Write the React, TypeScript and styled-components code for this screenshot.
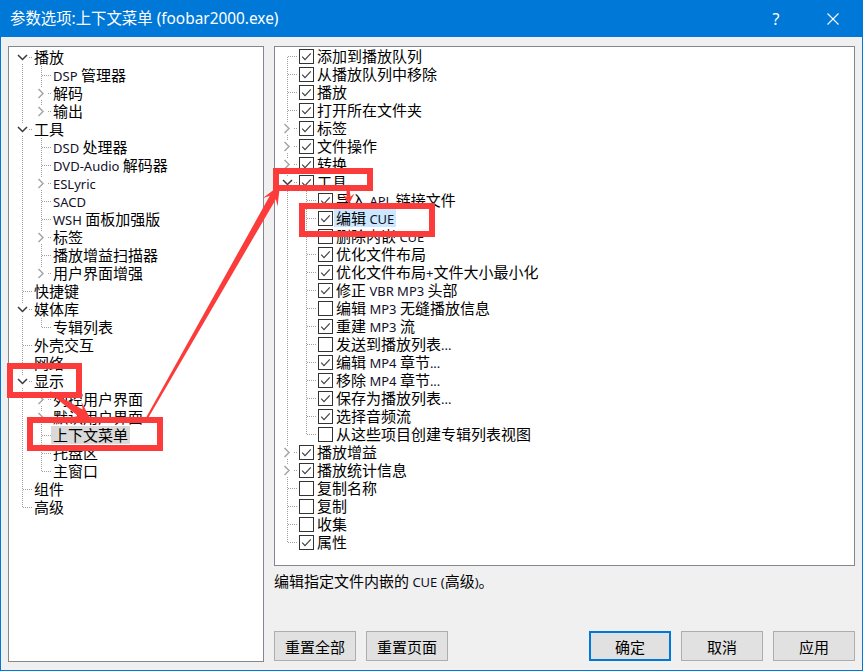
import React from "react";
import styled, { createGlobalStyle } from "styled-components";

const GlobalStyle = createGlobalStyle`
  html, body { margin: 0; padding: 0; background: #ffffff; }
  body { font-family: "Noto Sans", "Noto Sans CJK SC", sans-serif; }
  * { box-sizing: border-box; }
`;

const CJK = `"Noto Sans CJK SC", "Noto Sans", sans-serif`;
const TREEFONT = `"Liberation Sans", "Noto Sans CJK SC", sans-serif`;
const LATIN = `"Noto Sans", "Liberation Sans", sans-serif`;

/* ---------- window chrome ---------- */
const Window = styled.div`
  position: relative;
  width: 863px;
  height: 671px;
  background: #f0f0f0;
  border: 1px solid #0078d7;
  border-top: none;
  display: flex;
  flex-direction: column;
  overflow: hidden;
`;

const TitleBar = styled.div`
  height: 37px;
  flex: none;
  background: #0078d7;
  color: #ffffff;
  display: flex;
  align-items: center;
  padding-left: 9px;
`;

const TitleText = styled.div`
  flex: 1;
  font-family: "Noto Sans", "Noto Sans CJK SC", sans-serif;
  font-size: 15.4px;
  line-height: 20px;
  white-space: nowrap;
`;

const TitleButton = styled.div<{ $w: number }>`
  width: ${(p) => p.$w}px;
  height: 37px;
  display: flex;
  align-items: center;
  justify-content: center;
  font-family: ${LATIN};
  font-size: 16px;
  color: #ffffff;
`;

const Content = styled.div`
  flex: 1;
  display: flex;
  gap: 10px;
  padding: 9px 7px 8px 7px;
  min-height: 0;
`;

const Panel = styled.div<{ $w?: number; $h?: number; $pt: number; $pl: number }>`
  ${(p) => (p.$w ? `width: ${p.$w}px;` : "")}
  ${(p) => (p.$h ? `height: ${p.$h}px;` : "")}
  flex: none;
  background: #ffffff;
  border: 1px solid #828790;
  padding: ${(p) => p.$pt}px 0 0 ${(p) => p.$pl}px;
  overflow: hidden;
  display: flex;
  flex-direction: column;
`;

const RightColumn = styled.div`
  flex: 1;
  display: flex;
  flex-direction: column;
  min-width: 0;
`;

const Description = styled.div`
  margin-top: 5px;
  height: 20px;
  line-height: 20px;
  font-family: ${CJK};
  font-size: 15px;
  color: #000;
  white-space: nowrap;
`;

const ButtonRow = styled.div`
  margin-top: auto;
  margin-bottom: 1px;
  display: flex;
  gap: 10px;
`;

const Spacer = styled.div`
  flex: 1;
`;

const Button = styled.div<{ $primary?: boolean }>`
  width: 82px;
  height: 30px;
  background: #e1e1e1;
  border: ${(p) => (p.$primary ? "2px solid #0078d7" : "1px solid #adadad")};
  display: flex;
  align-items: center;
  justify-content: center;
  font-family: ${CJK};
  font-size: 15px;
  color: #000;
`;

/* ---------- tree ---------- */
const Row = styled.div`
  display: flex;
  align-items: center;
  height: 18px;
  flex: none;
  white-space: nowrap;
`;

const CellSvg = styled.svg`
  flex: none;
  display: block;
`;

const CheckSvg = styled.svg`
  flex: none;
  display: block;
  margin-left: 2px;
`;

const Label = styled.span<{ $sel?: "gray" | "blue"; $ml: number }>`
  display: inline-block;
  height: 18px;
  padding: 1px 2px 0 2px;
  line-height: 18px;
  margin-left: ${(p) => p.$ml}px;
  background: ${(p) =>
    p.$sel === "gray" ? "#d9d9d9" : p.$sel === "blue" ? "#cce8ff" : "transparent"};
  font-family: ${TREEFONT};
  font-size: 15px;
  color: #000;
`;

const Latin = styled.span`
  font-family: ${LATIN};
  font-size: 13px;
  color: #10102a;
`;

const Mixed: React.FC<{ text: string }> = ({ text }) => {
  const parts = text.match(/[\x20-\x7e]+|[^\x20-\x7e]+/g) || [];
  return (
    <>
      {parts.map((p, i) =>
        /^[\x20-\x7e]+$/.test(p) ? <Latin key={i}>{p}</Latin> : <React.Fragment key={i}>{p}</React.Fragment>
      )}
    </>
  );
};

type TNode = {
  label: string;
  checked?: boolean;
  closed?: boolean;
  sel?: "gray" | "blue";
  children?: TNode[];
};

type FlatRow = {
  node: TNode;
  guides: boolean[];
  up: boolean;
  down: boolean;
  expander?: "open" | "closed";
};

function flatten(nodes: TNode[], guides: boolean[], out: FlatRow[]) {
  nodes.forEach((n, i) => {
    const last = i === nodes.length - 1;
    const firstRoot = guides.length === 0 && i === 0;
    out.push({
      node: n,
      guides,
      up: !firstRoot,
      down: !last,
      expander: n.children ? "open" : n.closed ? "closed" : undefined,
    });
    if (n.children) flatten(n.children, [...guides, !last], out);
  });
  return out;
}

const DOT = "#a0a0a0";

const GuideCell: React.FC<{ on: boolean }> = ({ on }) => (
  <CellSvg width={19} height={18} viewBox="0 0 19 18" shapeRendering="crispEdges">
    {on && <line x1={9.5} y1={0} x2={9.5} y2={18} stroke={DOT} strokeDasharray="1 1" />}
  </CellSvg>
);

const NodeCell: React.FC<{ up: boolean; down: boolean; expander?: "open" | "closed" }> = ({
  up,
  down,
  expander,
}) => (
  <CellSvg width={19} height={18} viewBox="0 0 19 18">
    <g shapeRendering="crispEdges">
      {up && <line x1={9.5} y1={0} x2={9.5} y2={10} stroke={DOT} strokeDasharray="1 1" />}
      {down && <line x1={9.5} y1={10} x2={9.5} y2={18} stroke={DOT} strokeDasharray="1 1" />}
      <line x1={10} y1={9.5} x2={19} y2={9.5} stroke={DOT} strokeDasharray="1 1" />
    </g>
    {expander && <rect x={4} y={4} width={11} height={11} fill="#ffffff" />}
    {expander === "open" && (
      <polyline points="5,7 9.5,11.5 14,7" fill="none" stroke="#3a3a3a" strokeWidth={1.5} />
    )}
    {expander === "closed" && (
      <polyline points="6.5,5 11,9.5 6.5,14" fill="none" stroke="#a6a6a6" strokeWidth={1.5} />
    )}
  </CellSvg>
);

const CheckBox: React.FC<{ checked?: boolean }> = ({ checked }) => (
  <CheckSvg width={15} height={15} viewBox="0 0 15 15">
    <rect x={0.5} y={0.5} width={14} height={14} fill="#ffffff" stroke="#333333" shapeRendering="crispEdges" />
    {checked && (
      <polyline points="3.2,7.6 6,10.6 11.8,4.4" fill="none" stroke="#3c3c3c" strokeWidth={1.1} />
    )}
  </CheckSvg>
);

const Tree: React.FC<{ data: TNode[]; checks?: boolean }> = ({ data, checks }) => {
  const rows = flatten(data, [], []);
  return (
    <>
      {rows.map((r, i) => (
        <Row key={i}>
          {r.guides.map((g, j) => (
            <GuideCell key={j} on={g} />
          ))}
          <NodeCell up={r.up} down={r.down} expander={r.expander} />
          {checks && <CheckBox checked={r.node.checked} />}
          <Label $sel={r.node.sel} $ml={checks ? 1 : 0}>
            <Mixed text={r.node.label} />
          </Label>
        </Row>
      ))}
    </>
  );
};

const leftTree: TNode[] = [
  {
    label: "播放",
    children: [{ label: "DSP 管理器" }, { label: "解码", closed: true }, { label: "输出", closed: true }],
  },
  {
    label: "工具",
    children: [
      { label: "DSD 处理器" },
      { label: "DVD-Audio 解码器" },
      { label: "ESLyric", closed: true },
      { label: "SACD" },
      { label: "WSH 面板加强版" },
      { label: "标签", closed: true },
      { label: "播放增益扫描器" },
      { label: "用户界面增强", closed: true },
    ],
  },
  { label: "快捷键" },
  { label: "媒体库", children: [{ label: "专辑列表" }] },
  { label: "外壳交互" },
  { label: "网络" },
  {
    label: "显示",
    children: [
      { label: "列控用户界面", closed: true },
      { label: "默认用户界面", closed: true },
      { label: "上下文菜单", sel: "gray" },
      { label: "托盘区" },
      { label: "主窗口" },
    ],
  },
  { label: "组件" },
  { label: "高级" },
];

const rightTree: TNode[] = [
  { label: "添加到播放队列", checked: true },
  { label: "从播放队列中移除", checked: true },
  { label: "播放", checked: true },
  { label: "打开所在文件夹", checked: true },
  { label: "标签", checked: true, closed: true },
  { label: "文件操作", checked: true, closed: true },
  { label: "转换", checked: true, closed: true },
  {
    label: "工具",
    checked: true,
    children: [
      { label: "导入 APL 链接文件", checked: true },
      { label: "编辑 CUE", checked: true, sel: "blue" },
      { label: "删除内嵌 CUE", checked: false },
      { label: "优化文件布局", checked: true },
      { label: "优化文件布局+文件大小最小化", checked: true },
      { label: "修正 VBR MP3 头部", checked: true },
      { label: "编辑 MP3 无缝播放信息", checked: false },
      { label: "重建 MP3 流", checked: true },
      { label: "发送到播放列表...", checked: false },
      { label: "编辑 MP4 章节...", checked: true },
      { label: "移除 MP4 章节...", checked: true },
      { label: "保存为播放列表...", checked: true },
      { label: "选择音频流", checked: true },
      { label: "从这些项目创建专辑列表视图", checked: false },
    ],
  },
  { label: "播放增益", checked: true, closed: true },
  { label: "播放统计信息", checked: true, closed: true },
  { label: "复制名称", checked: false },
  { label: "复制", checked: false },
  { label: "收集", checked: false },
  { label: "属性", checked: true },
];

/* ---------- annotation overlay ---------- */
const Overlay = styled.svg`
  position: absolute;
  top: 0;
  left: -1px;
  pointer-events: none;
`;

const RED = "#fc3b3b";

type Box = [number, number, number, number];
const boxes: Box[] = [
  [7, 363, 82, 398],
  [27, 417, 163, 451],
  [273, 168, 373, 191],
  [299, 203, 435, 237],
];

function arrowPoints(
  tx: number,
  ty: number,
  px: number,
  py: number,
  tailW: number,
  shaftW: number,
  headLen: number,
  headW: number
) {
  const dx = px - tx;
  const dy = py - ty;
  const L = Math.hypot(dx, dy);
  const ux = dx / L;
  const uy = dy / L;
  const nx = -uy;
  const ny = ux;
  const bx = px - ux * headLen;
  const by = py - uy * headLen;
  const sx = px - ux * headLen * 0.72;
  const sy = py - uy * headLen * 0.72;
  const pts = [
    [tx + (nx * tailW) / 2, ty + (ny * tailW) / 2],
    [sx + (nx * shaftW) / 2, sy + (ny * shaftW) / 2],
    [bx + (nx * headW) / 2, by + (ny * headW) / 2],
    [px, py],
    [bx - (nx * headW) / 2, by - (ny * headW) / 2],
    [sx - (nx * shaftW) / 2, sy - (ny * shaftW) / 2],
    [tx - (nx * tailW) / 2, ty - (ny * tailW) / 2],
  ];
  return pts.map((p) => `${p[0].toFixed(1)},${p[1].toFixed(1)}`).join(" ");
}

const Annotations: React.FC = () => (
  <Overlay width={863} height={671} viewBox="0 0 863 671">
    {boxes.map(([x1, y1, x2, y2], i) => (
      <rect
        key={i}
        x={x1 + 3}
        y={y1 + 3}
        width={x2 - x1 - 6}
        height={y2 - y1 - 6}
        fill="none"
        stroke={RED}
        strokeWidth={6}
      />
    ))}
    <polygon points={arrowPoints(147, 418, 280, 185, 2, 7, 20, 17)} fill={RED} />
    <polygon points={arrowPoints(50, 392, 91, 420, 2, 8, 18, 19)} fill={RED} />
    <polygon points={arrowPoints(348, 188, 349, 204, 3, 4, 10, 12)} fill={RED} />
  </Overlay>
);

export default function App() {
  return (
    <>
      <GlobalStyle />
      <Window>
        <TitleBar>
          <TitleText>参数选项:上下文菜单 (foobar2000.exe)</TitleText>
          <TitleButton $w={56}>?</TitleButton>
          <TitleButton $w={58}>
            <svg width={12} height={12} viewBox="0 0 12 12">
              <path d="M0.5 0.5 L11.5 11.5 M11.5 0.5 L0.5 11.5" stroke="#ffffff" strokeWidth={1.1} />
            </svg>
          </TitleButton>
        </TitleBar>
        <Content>
          <Panel $w={256} $pt={1} $pl={4}>
            <Tree data={leftTree} />
          </Panel>
          <RightColumn>
            <Panel $h={520} $pt={0} $pl={3}>
              <Tree data={rightTree} checks />
            </Panel>
            <Description>
              <Mixed text="编辑指定文件内嵌的 CUE (高级)。" />
            </Description>
            <ButtonRow>
              <Button>重置全部</Button>
              <Button>重置页面</Button>
              <Spacer />
              <Button $primary>确定</Button>
              <Button>取消</Button>
              <Button>应用</Button>
            </ButtonRow>
          </RightColumn>
        </Content>
        <Annotations />
      </Window>
    </>
  );
}
